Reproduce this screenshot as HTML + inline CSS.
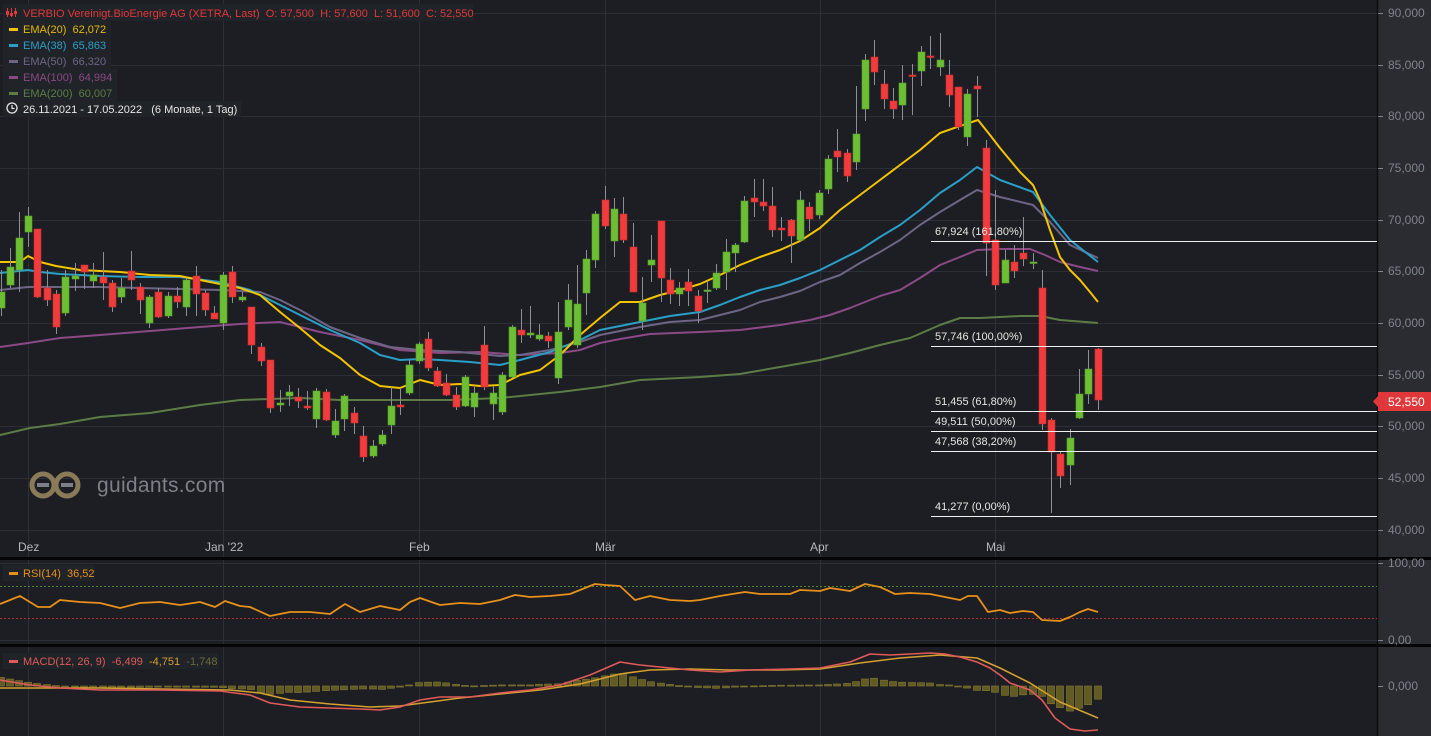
<!DOCTYPE html>
<html><head><meta charset="utf-8"><style>
html,body{margin:0;padding:0;background:#1c1e23;width:1431px;height:736px;overflow:hidden;font-family:"Liberation Sans",sans-serif}
svg{display:block}
text{white-space:pre}
</style></head><body>
<svg id="s" width="1431" height="736" xmlns="http://www.w3.org/2000/svg" font-family="Liberation Sans, sans-serif" xml:space="preserve">
<rect width="1431" height="736" fill="#1c1e23"/>
<rect x="1378" y="0" width="53" height="736" fill="#2a2c31"/>
<line x1="1377.5" y1="0" x2="1377.5" y2="736" stroke="#0c0d0f" stroke-width="1.5"/>
<g id="grid" stroke="#2c2f36" stroke-width="1"></g>
<rect x="0" y="557" width="1431" height="3" fill="#050505"/>
<rect x="0" y="644" width="1431" height="3" fill="#050505"/>
<g id="axis" fill="#7f838b" font-size="12"></g>
<g>
<circle cx="43" cy="485" r="11" fill="none" stroke="#8b7a58" stroke-width="5"/>
<circle cx="67" cy="485" r="11" fill="none" stroke="#8b7a58" stroke-width="5"/>
<rect x="37" y="483" width="12" height="4" fill="#7d7f86"/>
<rect x="61" y="483" width="12" height="4" fill="#7d7f86"/>
<text x="97" y="492" font-size="21" letter-spacing="0.3" fill="#7d8087">guidants.com</text>
</g>
<g id="ema"></g>
<g id="candles"></g>
<g id="fib" fill="#e6e6e6" font-size="11"></g>
<g id="sub"></g>
<g font-size="11">
<rect x="3" y="4" width="470" height="17" fill="#202328"/>
<g stroke="#e0383a" stroke-width="1"><line x1="7.5" y1="8" x2="7.5" y2="17"/><line x1="11.5" y1="8" x2="11.5" y2="17"/><line x1="15.5" y1="8" x2="15.5" y2="17"/></g>
<rect x="6" y="11" width="3" height="4" fill="#e0383a"/><rect x="10" y="13" width="3" height="3" fill="#e0383a"/><rect x="14" y="11" width="3" height="3" fill="#e0383a"/>
<text x="23" y="17" fill="#e0383a">VERBIO Vereinigt.BioEnergie AG (XETRA, Last)  O: 57,500  H: 57,600  L: 51,600  C: 52,550</text>
<rect x="3" y="21" width="108" height="16" fill="#202328"/>
<rect x="9" y="28" width="9" height="3" fill="#f5c400"/><text x="23" y="33" fill="#e8bb00">EMA(20)  62,072</text>
<rect x="3" y="37" width="108" height="16" fill="#202328"/>
<rect x="9" y="44" width="9" height="3" fill="#2a9fc7"/><text x="23" y="49" fill="#2a9fc7">EMA(38)  65,863</text>
<rect x="3" y="53" width="108" height="16" fill="#202328"/>
<rect x="9" y="60" width="9" height="3" fill="#6e6585"/><text x="23" y="65" fill="#6e6585">EMA(50)  66,320</text>
<rect x="3" y="69" width="114" height="16" fill="#202328"/>
<rect x="9" y="76" width="9" height="3" fill="#8b4a85"/><text x="23" y="81" fill="#8b4a85">EMA(100)  64,994</text>
<rect x="3" y="85" width="114" height="16" fill="#202328"/>
<rect x="9" y="92" width="9" height="3" fill="#5d7c45"/><text x="23" y="97" fill="#5d7c45">EMA(200)  60,007</text>
<rect x="3" y="101" width="238" height="16" fill="#202328"/>
<circle cx="12" cy="108" r="5" fill="none" stroke="#e6e6e6" stroke-width="1.3"/><path d="M12 105v3.5h2.5" fill="none" stroke="#e6e6e6" stroke-width="1.2"/>
<text x="23" y="113" fill="#e6e6e6">26.11.2021 - 17.05.2022   (6 Monate, 1 Tag)</text>
<rect x="3" y="565" width="92" height="16" fill="#202328"/>
<rect x="9" y="572" width="9" height="3" fill="#e8901a"/><text x="23" y="577" fill="#e8901a">RSI(14)  36,52</text>
<rect x="3" y="653" width="216" height="16" fill="#202328"/>
<rect x="9" y="660" width="9" height="3" fill="#e05a5a"/><text x="23" y="665" fill="#e05a5a">MACD(12, 26, 9)  -6,499  <tspan fill="#d4a030">-4,751</tspan>  <tspan fill="#6b6a3a">-1,748</tspan></text>
</g>
<rect x="1378" y="392" width="53" height="19" fill="#e0383a"/>
<path d="M1378 396 l-5 5.5 l5 5.5z" fill="#e0383a"/>
<text x="1388" y="406" font-size="12" fill="#fff">52,550</text>
</svg>
<script>
var NS="http://www.w3.org/2000/svg";
function el(p,t,a,txt){var e=document.createElementNS(NS,t);for(var k in a)e.setAttribute(k,a[k]);if(txt!=null)e.textContent=txt;document.getElementById(p).appendChild(e);return e;}
var hs=[13,65,116,168,220,271,323,375,426,478,530];
hs.forEach(function(y){el('grid','line',{x1:0,y1:y+.5,x2:1377,y2:y+.5});});
[28,223,419,605,820,995].forEach(function(x){el('grid','line',{x1:x+.5,y1:0,x2:x+.5,y2:557});el('grid','line',{x1:x+.5,y1:560,x2:x+.5,y2:644});el('grid','line',{x1:x+.5,y1:647,x2:x+.5,y2:736});});
el('grid','line',{x1:0,y1:563.5,x2:1377,y2:563.5});el('grid','line',{x1:0,y1:640.5,x2:1377,y2:640.5});
el('grid','line',{x1:0,y1:586.5,x2:1377,y2:586.5,stroke:'#4d8a2a','stroke-dasharray':'2,2'});
el('grid','line',{x1:0,y1:618.5,x2:1377,y2:618.5,stroke:'#b8302e','stroke-dasharray':'2,2'});
var labs=['90,000','85,000','80,000','75,000','70,000','65,000','60,000','55,000','50,000','45,000','40,000'];
hs.forEach(function(y,i){el('axis','line',{x1:1378,y1:y+.5,x2:1383,y2:y+.5,stroke:'#7f838b'});el('axis','text',{x:1388,y:y+4},labs[i]);});
[[563,'100,00'],[640,'0,00'],[686,'0,000']].forEach(function(a){el('axis','line',{x1:1378,y1:a[0]+.5,x2:1383,y2:a[0]+.5,stroke:'#7f838b'});el('axis','text',{x:1388,y:a[0]+4},a[1]);});
[['Dez',18],["Jan '22",205],['Feb',409],['Mär',595],['Apr',810],['Mai',986]].forEach(function(a){el('axis','text',{x:a[1],y:551,fill:'#b5b8be'},a[0]);});
var C=[[1,'g',292,308,270,316],[10,'g',267,285,248,288],[19,'g',238,270,212,292],[28,'g',216,232,207,247],[37,'r',229,297,229,298],[47,'r',288,300,270,306],[56,'r',294,327,290,334],[65,'g',277,313,270,316],[75,'g',276,279,263,291],[84,'r',265,272,265,289],[93,'g',275,281,263,288],[103,'r',277,283,252,300],[112,'r',283,307,280,312],[121,'g',288,297,278,303],[131,'r',271,280,251,290],[140,'r',287,300,283,314],[149,'g',297,323,295,328],[158,'r',292,317,288,318],[168,'g',296,316,292,318],[177,'r',296,302,287,308],[186,'g',280,307,278,316],[196,'r',276,294,266,316],[205,'r',293,310,290,316],[214,'r',313,319,306,318],[223,'g',275,323,272,330],[232,'r',272,297,266,303],[242,'g',297,300,292,302],[251,'r',307,345,307,354],[261,'r',347,361,343,366],[270,'r',360,408,360,413],
[280,'g',403,405,390,412],[289,'g',392,396,385,406],[298,'r',397,401,388,408],[307,'r',406,408,391,410],[316,'g',391,419,388,428],[326,'r',392,420,389,421],[335,'g',421,435,409,438],[344,'g',396,419,394,431],[354,'r',413,423,407,434],[363,'r',436,457,426,462],[373,'g',446,456,440,458],[382,'g',435,444,430,446],[391,'g',406,425,387,434],[400,'r',405,407,388,415],[409,'g',365,393,360,395],[419,'g',344,361,342,364],[428,'r',339,368,332,371],[437,'r',371,386,367,387],[446,'r',383,395,374,396],[456,'r',395,407,387,410],[465,'g',377,406,375,407],[474,'g',393,407,387,417],[484,'r',345,387,326,390],[493,'g',393,404,386,420],[502,'g',375,412,372,415],[512,'g',327,377,325,378],[521,'r',330,335,309,343],[530,'g',333,335,306,338],[539,'g',335,339,324,341],[548,'r',336,341,332,348],[558,'g',332,378,302,384],
[568,'g',300,327,284,330],[577,'g',304,345,265,348],[586,'g',259,293,250,315],[595,'g',214,260,211,268],[605,'r',200,226,186,229],[614,'g',209,241,198,257],[623,'r',214,240,197,243],[633,'r',247,292,223,292],[642,'g',303,321,277,330],[651,'g',260,265,235,282],[661,'r',221,278,221,302],[670,'r',280,294,268,304],[679,'g',288,294,282,306],[688,'r',282,291,269,306],[698,'r',296,311,290,323],[707,'g',290,291,281,303],[716,'g',273,288,264,290],[726,'g',252,272,239,290],[735,'g',245,253,243,272],[744,'g',201,242,196,243],[754,'r',198,202,179,217],[763,'r',202,206,179,211],[772,'r',206,230,187,237],[781,'r',228,230,217,241],[791,'r',220,236,219,263],[800,'g',200,240,191,242],[809,'r',207,219,202,231],[819,'g',193,215,190,219],[828,'g',159,189,155,194],[837,'r',151,157,129,172],
[847,'r',153,176,149,182],[856,'g',134,162,86,170],[865,'g',60,109,54,121],[874,'r',57,72,40,85],[884,'r',84,99,70,109],[893,'r',101,109,88,119],[902,'g',83,105,65,120],[912,'r',75,76,64,115],[921,'g',52,71,46,86],[930,'r',56,57,36,69],[940,'g',60,67,33,76],[949,'r',75,95,60,107],[958,'r',87,127,87,130],[967,'g',94,137,89,146],[977,'r',86,89,76,117],[986,'r',148,243,140,276],[995,'r',240,285,190,290],[1005,'g',260,283,250,283],[1014,'r',262,271,245,278],[1023,'r',253,259,217,266],[1033,'g',262,263,253,269],[1042,'r',288,424,270,430],[1051,'r',420,452,418,513],[1060,'r',454,476,452,488],[1070,'g',438,465,429,485],[1079,'g',394,418,369,419],[1088,'g',369,394,350,404],[1098,'r',349,400,348,410]];
C.forEach(function(c){var col=c[1]=='g'?'#6cbf35':'#f03c3c';
el('candles','line',{x1:c[0]+.5,y1:c[4],x2:c[0]+.5,y2:c[5],stroke:'#8c8f95','stroke-width':1});
el('candles','rect',{x:c[0]-3,y:c[2],width:7,height:Math.max(1.5,c[3]-c[2]),fill:col,stroke:c[1]=='g'?'#5aa02a':'#c82e2e','stroke-width':.6});});
function pl(p,pts,col,w){el(p,'polyline',{points:pts.map(function(a){return a.join(',')}).join(' '),fill:'none',stroke:col,'stroke-width':w,'stroke-linejoin':'round'});}
var E200=[[0,435],[30,428],[60,424],[100,417],[150,413],[200,405],[240,400],[300,398],[340,400],[400,400],[450,400],[500,398],[560,392],[600,387],[640,380],[700,377],[740,374],[780,367],[820,360],[850,353],[880,345],[910,338],[940,325],[960,318],[980,318],[1000,317],[1020,316],[1040,316],[1060,320],[1098,323]];
var E100=[[0,347],[28,343],[60,338],[100,335],[150,331],[200,327],[240,324],[280,322],[320,332],[360,340],[400,350],[440,353],[480,352],[520,355],[560,353],[580,350],[600,343],[620,339],[650,334],[700,332],[740,330],[780,325],[810,320],[830,315],[850,308],[880,296],[900,290],[920,278],[940,265],[960,257],[977,250],[1000,249],[1030,249],[1045,255],[1060,262],[1080,267],[1098,271]];
var E50=[[0,290],[28,287],[60,287],[100,287],[140,288],[180,289],[220,290],[260,292],[280,300],[300,310],[330,327],[360,338],[390,347],[420,350],[460,352],[500,356],[520,355],[550,350],[580,342],[600,335],[620,331],[640,327],[670,322],[700,320],[720,315],[740,310],[760,302],[780,297],[800,291],[820,282],[840,275],[860,263],[880,252],[900,240],[920,225],[940,212],[960,200],[977,190],[1000,197],[1033,205],[1050,222],[1070,245],[1098,258]];
var E38=[[0,273],[28,270],[40,272],[60,274],[100,276],[140,277],[180,277],[220,282],[250,290],[270,300],[300,315],[330,330],[360,343],[380,355],[400,360],[420,359],[440,360],[470,362],[500,365],[520,360],[550,352],[580,340],[600,330],[620,326],[640,322],[670,316],[700,312],[720,305],[740,297],[760,290],[780,285],[800,278],[820,270],[840,260],[860,250],[880,237],[900,225],[920,210],[940,193],[960,180],[977,167],[1000,180],[1033,192],[1050,215],[1070,240],[1098,262]];
var E20=[[0,262],[20,262],[28,256],[40,262],[56,266],[80,270],[120,272],[150,275],[180,276],[210,282],[240,288],[260,295],[280,312],[300,328],[320,345],[340,358],[360,375],[380,386],[400,388],[420,380],[440,385],[460,384],[480,386],[500,385],[520,375],[540,370],[560,355],[580,335],[600,318],[620,302],[640,302],[660,295],[680,290],[700,284],[720,275],[740,265],[760,257],[780,250],[800,241],[820,228],[840,210],[860,195],[880,180],[900,165],[920,150],[940,133],[960,126],[978,120],[990,135],[1000,148],[1010,160],[1020,172],[1033,185],[1040,200],[1050,230],[1060,257],[1070,270],[1080,280],[1090,292],[1098,302]];
pl('ema',E200,'#5d7c45',2);pl('ema',E100,'#8b4a85',2);pl('ema',E50,'#6e6585',2);pl('ema',E38,'#2a9fc7',2);pl('ema',E20,'#f5c400',2);
[[241,'67,924 (161,80%)'],[346,'57,746 (100,00%)'],[411,'51,455 (61,80%)'],[431,'49,511 (50,00%)'],[451,'47,568 (38,20%)'],[516,'41,277 (0,00%)']].forEach(function(f){el('fib','line',{x1:931,y1:f[0]+.5,x2:1377,y2:f[0]+.5,stroke:'#f0f0f0','stroke-width':1});el('fib','text',{x:935,y:f[0]-6},f[1]);});
pl('sub',[[0,604],[20,596],[38,607],[50,607],[60,600],[80,602],[100,603],[120,608],[140,603],[160,602],[180,605],[200,602],[215,607],[225,601],[240,606],[250,607],[270,616],[290,612],[310,612],[330,614],[345,604],[360,612],[380,606],[400,610],[410,602],[420,598],[440,605],[460,603],[480,604],[500,600],[515,595],[530,597],[550,596],[570,594],[580,590],[595,584],[605,585],[620,586],[635,600],[650,596],[670,600],[690,601],[700,600],[720,596],[745,592],[760,594],[790,594],[800,590],[820,591],[830,588],[850,591],[865,584],[880,587],[895,594],[910,593],[930,594],[945,597],[960,600],[968,596],[977,596],[988,612],[1000,610],[1010,613],[1023,611],[1033,612],[1042,620],[1060,621],[1070,617],[1080,612],[1088,609],[1098,612]],'#e8901a',1.8);
var M=[[0,680],[30,685],[60,688],[100,690],[160,690],[220,691],[250,695],[270,703],[300,707],[330,708],[360,709],[380,710],[400,707],[420,700],[440,697],[470,697],[500,693],[530,690],[560,685],[590,675],[620,662],[640,665],[660,667],[690,670],[720,672],[750,670],[790,669],[820,668],[850,662],[870,654],[890,655],[910,654],[930,653],[945,654],[960,657],[977,662],[990,668],[1000,675],[1010,683],[1030,690],[1042,700],[1055,718],[1070,729],[1085,731],[1098,730]];
var S=[[0,688],[40,688],[100,688],[160,689],[230,690],[260,693],[290,700],[330,704],[370,707],[400,706],[430,702],[460,698],[500,694],[540,690],[580,684],[620,674],[650,670],[690,669],[730,670],[780,670],[820,669],[860,663],[900,658],[940,655],[977,658],[1000,668],[1030,683],[1060,702],[1098,718]];
function at(a,x){for(var i=1;i<a.length;i++){if(x<=a[i][0]){var t=(x-a[i-1][0])/(a[i][0]-a[i-1][0]);return a[i-1][1]+t*(a[i][1]-a[i-1][1]);}}return a[a.length-1][1];}
C.forEach(function(c){var d=(at(M,c[0])-at(S,c[0]))*1.1;var y0=686,y1=686+d;el('sub','rect',{x:c[0]-3.5,y:Math.min(y0,y1),width:7,height:Math.max(1,Math.abs(d)),fill:'#615b23',stroke:'#857a30','stroke-width':.6});});
pl('sub',S,'#d4a030',1.6);pl('sub',M,'#e05a5a',1.6);
</script>
</body></html>
